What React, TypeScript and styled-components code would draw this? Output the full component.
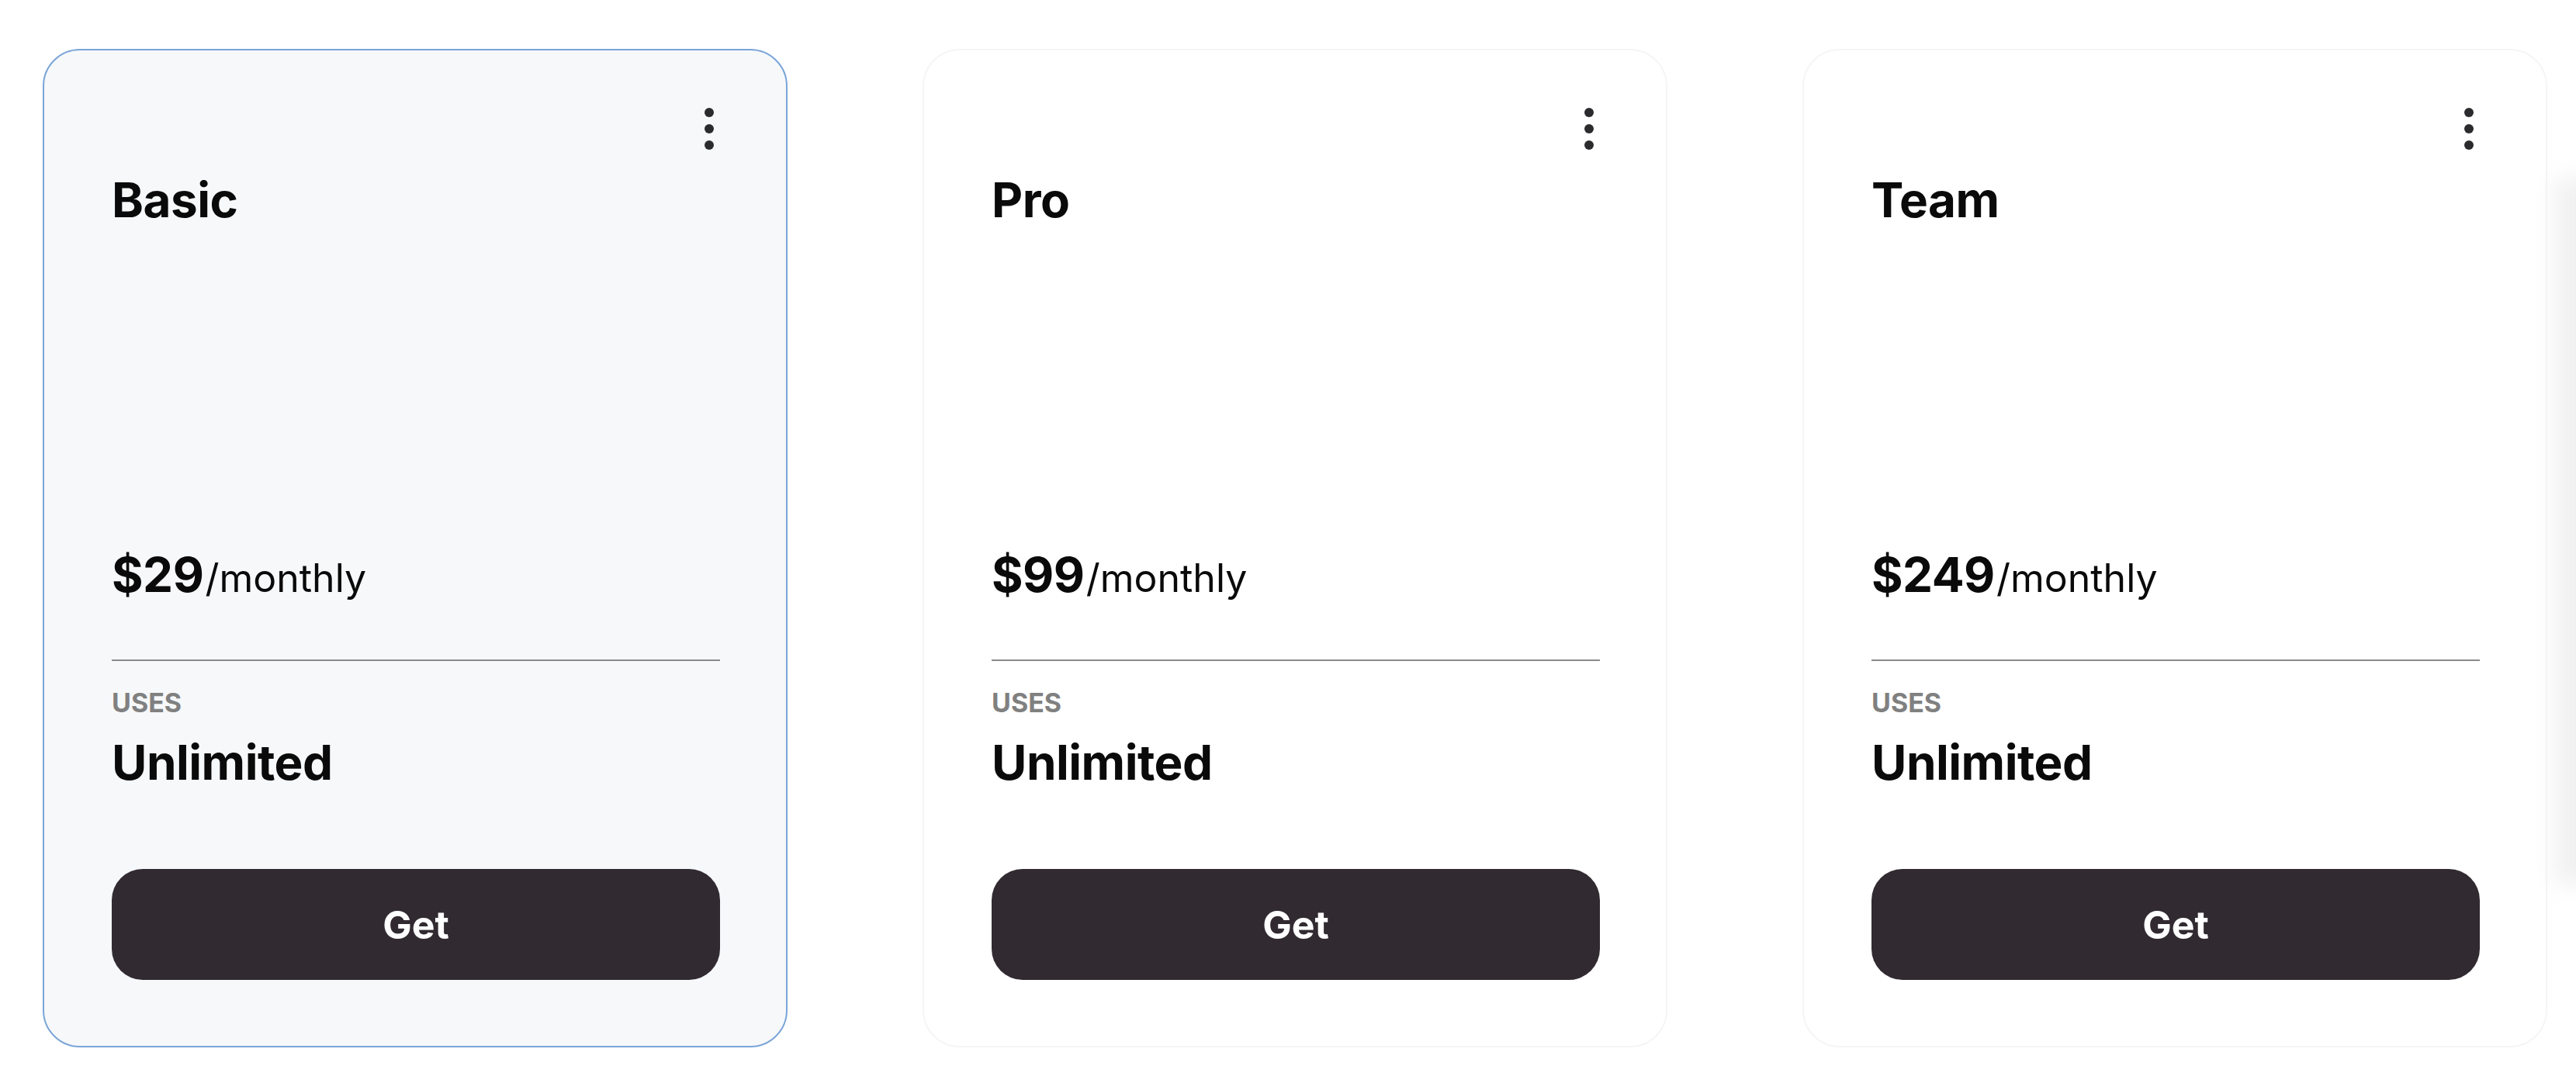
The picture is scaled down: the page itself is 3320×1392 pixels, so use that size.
import React from "react";
import styled, { createGlobalStyle } from "styled-components";

const Global = createGlobalStyle`
  html, body {
    margin: 0;
    padding: 0;
    background: #ffffff;
    font-family: Inter, "Noto Sans", "Liberation Sans", sans-serif;
    color: #0a0a0a;
  }
  * { box-sizing: border-box; }
`;

const Page = styled.div`
  position: relative;
  width: 3320px;
  height: 1392px;
  overflow: hidden;
  background: #ffffff;
`;

const Track = styled.div`
  display: flex;
  gap: 174px;
  padding: 63px 0 0 55px;
`;

const Card = styled.div<{ $active?: boolean }>`
  flex: 0 0 960px;
  height: 1287px;
  display: flex;
  flex-direction: column;
  padding: 73px 85px 85px 87px;
  border-radius: 48px;
  background: ${(p) => (p.$active ? "#f6f8fa" : "#ffffff")};
  border: ${(p) => (p.$active ? "2px solid #7aa5d8" : "2px solid #f5f5f5")};
`;

const Header = styled.div`
  display: flex;
  justify-content: flex-end;
  padding-right: 7px;
  height: 56px;
`;

const MenuButton = styled.button`
  border: none;
  background: transparent;
  padding: 0;
  width: 14px;
  height: 56px;
  display: flex;
  align-items: center;
  justify-content: center;
  cursor: pointer;
`;

const Title = styled.h2`
  margin: 33px 0 0 0;
  font-size: 62px;
  line-height: 1;
  font-weight: 700;
  letter-spacing: -0.5px;
  color: #0a0a0a;
`;

const Spacer = styled.div`
  flex: 1;
`;

const Price = styled.div`
  display: flex;
  align-items: baseline;
  line-height: 1;
`;

const Amount = styled.span`
  font-size: 62px;
  font-weight: 700;
  letter-spacing: -0.5px;
  color: #0a0a0a;
`;

const Period = styled.span`
  font-size: 50px;
  font-weight: 400;
  color: #0a0a0a;
  margin-left: 2px;
`;

const Divider = styled.hr`
  margin: 78px 0 0 0;
  border: none;
  height: 2px;
  background: #8a8a8a;
`;

const Label = styled.div`
  margin-top: 37px;
  font-size: 34px;
  line-height: 1;
  font-weight: 700;
  color: #808080;
`;

const Value = styled.div`
  margin-top: 29px;
  font-size: 62px;
  line-height: 1;
  font-weight: 700;
  letter-spacing: -0.5px;
  color: #0a0a0a;
`;

const GetButton = styled.button`
  margin-top: 106px;
  height: 143px;
  width: 100%;
  border: none;
  border-radius: 40px;
  background: #312a30;
  color: #ffffff;
  font-family: Inter, "Noto Sans", "Liberation Sans", sans-serif;
  font-size: 50px;
  font-weight: 700;
  cursor: pointer;
`;

const EdgeShade = styled.div`
  position: absolute;
  left: 3292px;
  top: 230px;
  width: 80px;
  height: 910px;
  background: #f1f1f1;
  filter: blur(14px);
`;

const Dots = () => (
  <svg width="14" height="56" viewBox="0 0 14 56">
    <circle cx="7" cy="7" r="6" fill="#2b2b2e" />
    <circle cx="7" cy="28" r="6" fill="#2b2b2e" />
    <circle cx="7" cy="49" r="6" fill="#2b2b2e" />
  </svg>
);

const plans = [
  { name: "Basic", price: "$29", active: true },
  { name: "Pro", price: "$99", active: false },
  { name: "Team", price: "$249", active: false },
];

export default function App() {
  return (
    <Page>
      <Global />
      <EdgeShade />
      <Track>
        {plans.map((p) => (
          <Card key={p.name} $active={p.active}>
            <Header>
              <MenuButton aria-label="More">
                <Dots />
              </MenuButton>
            </Header>
            <Title>{p.name}</Title>
            <Spacer />
            <Price>
              <Amount>{p.price}</Amount>
              <Period>/monthly</Period>
            </Price>
            <Divider />
            <Label>USES</Label>
            <Value>Unlimited</Value>
            <GetButton>Get</GetButton>
          </Card>
        ))}
      </Track>
    </Page>
  );
}
